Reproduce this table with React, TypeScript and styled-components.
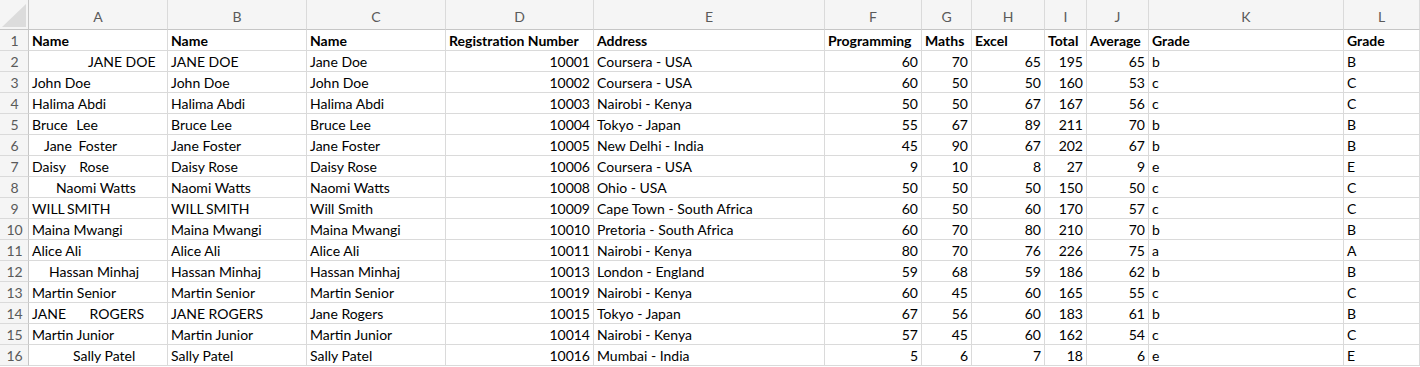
import styled, { createGlobalStyle } from "styled-components";

const GlobalStyle = createGlobalStyle`
  html, body {
    margin: 0;
    padding: 0;
    background: #ffffff;
  }
  body {
    font-family: Lato, "Liberation Sans", Arial, sans-serif;
  }
`;

const COLS = ["A", "B", "C", "D", "E", "F", "G", "H", "I", "J", "K", "L"];
// row header + A..K, L takes the rest
const WIDTHS = [29, 139, 139, 139, 148, 231, 97, 50, 73, 42, 62, 195];

type Cell = { t: string; pad?: number; ws?: number };
type Row = {
  names: Cell[];
  reg: number;
  address: string;
  scores: number[];
  grade: string;
};

const rows: Row[] = [
  { names: [{ t: "JANE DOE", pad: 56 }, { t: "JANE DOE" }, { t: "Jane Doe" }], reg: 10001, address: "Coursera - USA", scores: [60, 70, 65, 195, 65], grade: "b" },
  { names: [{ t: "John Doe" }, { t: "John Doe" }, { t: "John Doe" }], reg: 10002, address: "Coursera - USA", scores: [60, 50, 50, 160, 53], grade: "c" },
  { names: [{ t: "Halima Abdi" }, { t: "Halima Abdi" }, { t: "Halima Abdi" }], reg: 10003, address: "Nairobi - Kenya", scores: [50, 50, 67, 167, 56], grade: "c" },
  { names: [{ t: "Bruce Lee", ws: 5 }, { t: "Bruce Lee" }, { t: "Bruce Lee" }], reg: 10004, address: "Tokyo - Japan", scores: [55, 67, 89, 211, 70], grade: "b" },
  { names: [{ t: "Jane Foster", pad: 12, ws: 3 }, { t: "Jane Foster" }, { t: "Jane Foster" }], reg: 10005, address: "New Delhi - India", scores: [45, 90, 67, 202, 67], grade: "b" },
  { names: [{ t: "Daisy Rose", ws: 10 }, { t: "Daisy Rose" }, { t: "Daisy Rose" }], reg: 10006, address: "Coursera - USA", scores: [9, 10, 8, 27, 9], grade: "e" },
  { names: [{ t: "Naomi Watts", pad: 24 }, { t: "Naomi Watts" }, { t: "Naomi Watts" }], reg: 10008, address: "Ohio - USA", scores: [50, 50, 50, 150, 50], grade: "c" },
  { names: [{ t: "WILL SMITH", ws: -1 }, { t: "WILL SMITH", ws: -1 }, { t: "Will Smith" }], reg: 10009, address: "Cape Town - South Africa", scores: [60, 50, 60, 170, 57], grade: "c" },
  { names: [{ t: "Maina Mwangi" }, { t: "Maina Mwangi" }, { t: "Maina Mwangi" }], reg: 10010, address: "Pretoria - South Africa", scores: [60, 70, 80, 210, 70], grade: "b" },
  { names: [{ t: "Alice Ali" }, { t: "Alice Ali" }, { t: "Alice Ali" }], reg: 10011, address: "Nairobi - Kenya", scores: [80, 70, 76, 226, 75], grade: "a" },
  { names: [{ t: "Hassan Minhaj", pad: 17 }, { t: "Hassan Minhaj" }, { t: "Hassan Minhaj" }], reg: 10013, address: "London - England", scores: [59, 68, 59, 186, 62], grade: "b" },
  { names: [{ t: "Martin Senior" }, { t: "Martin Senior" }, { t: "Martin Senior" }], reg: 10019, address: "Nairobi - Kenya", scores: [60, 45, 60, 165, 55], grade: "c" },
  { names: [{ t: "JANE ROGERS", ws: 20 }, { t: "JANE ROGERS" }, { t: "Jane Rogers" }], reg: 10015, address: "Tokyo - Japan", scores: [67, 56, 60, 183, 61], grade: "b" },
  { names: [{ t: "Martin Junior" }, { t: "Martin Junior" }, { t: "Martin Junior" }], reg: 10014, address: "Nairobi - Kenya", scores: [57, 45, 60, 162, 54], grade: "c" },
  { names: [{ t: "Sally Patel", pad: 41 }, { t: "Sally Patel" }, { t: "Sally Patel" }], reg: 10016, address: "Mumbai - India", scores: [5, 6, 7, 18, 6], grade: "e" },
];

const HEADINGS = ["Name", "Name", "Name", "Registration Number", "Address", "Programming", "Maths", "Excel", "Total", "Average", "Grade", "Grade"];

const Sheet = styled.div`
  display: grid;
  grid-template-columns: ${WIDTHS.map((w) => `${w}px`).join(" ")} 1fr;
  grid-template-rows: 30px;
  grid-auto-rows: 21px;
  width: 1420px;
  overflow: hidden;
  font-size: 14px;
  color: #000;
`;

const Corner = styled.div`
  box-sizing: border-box;
  background: #f5f5f5;
  border-right: 1px solid #c6c6c6;
  border-bottom: 1px solid #c6c6c6;
  display: flex;
  align-items: flex-end;
  justify-content: flex-end;
  padding: 0 2px 2px 0;
`;

const ColHead = styled.div`
  box-sizing: border-box;
  background: #f5f5f5;
  border-right: 1px solid #dadada;
  border-bottom: 1px solid #c6c6c6;
  color: #5a5a5a;
  display: flex;
  align-items: center;
  justify-content: center;
  padding-top: 3px;
`;

const RowHead = styled.div`
  box-sizing: border-box;
  background: #f5f5f5;
  border-right: 1px solid #c6c6c6;
  border-bottom: 1px solid #dadada;
  color: #5a5a5a;
  display: flex;
  align-items: center;
  justify-content: center;
  padding-left: 1px;
`;

const Cell = styled.div<{ $num?: boolean; $bold?: boolean; $pad?: number; $ws?: number }>`
  box-sizing: border-box;
  border-right: 1px solid #dadada;
  border-bottom: 1px solid #dadada;
  display: flex;
  align-items: center;
  justify-content: ${(p) => (p.$num ? "flex-end" : "flex-start")};
  padding: 0 3px 0 ${(p) => 3 + (p.$pad ?? 0)}px;
  font-weight: ${(p) => (p.$bold ? 700 : 400)};
  word-spacing: ${(p) => p.$ws ?? 0}px;
  white-space: pre;
  overflow: hidden;
`;

const CornerMark = () => (
  <svg width="24" height="23" viewBox="0 0 24 23">
    <polygon points="24,0 24,23 0,23" fill="#dcdcdc" />
  </svg>
);

export default function App() {
  return (
    <>
      <GlobalStyle />
      <Sheet>
        <Corner>
          <CornerMark />
        </Corner>
        {COLS.map((c) => (
          <ColHead key={c}>{c}</ColHead>
        ))}

        <RowHead>1</RowHead>
        {HEADINGS.map((h, i) => (
          <Cell key={i} $bold>
            {h}
          </Cell>
        ))}

        {rows.map((r, i) => (
          <Row key={i} n={i + 2} row={r} />
        ))}
      </Sheet>
    </>
  );
}

function Row({ n, row }: { n: number; row: Row }) {
  return (
    <>
      <RowHead>{n}</RowHead>
      {row.names.map((c, j) => (
        <Cell key={j} $pad={c.pad} $ws={c.ws}>
          {c.t}
        </Cell>
      ))}
      <Cell $num>{row.reg}</Cell>
      <Cell>{row.address}</Cell>
      {row.scores.map((s, j) => (
        <Cell key={j} $num>
          {s}
        </Cell>
      ))}
      <Cell>{row.grade}</Cell>
      <Cell>{row.grade.toUpperCase()}</Cell>
    </>
  );
}
